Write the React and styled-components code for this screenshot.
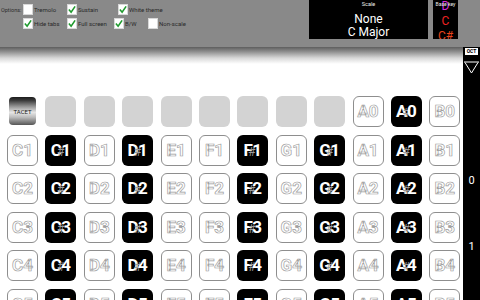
import React from "react";
import styled, { createGlobalStyle } from "styled-components";

const GlobalStyle = createGlobalStyle`
  html, body {
    margin: 0;
    padding: 0;
    background: #fff;
  }
  body {
    width: 480px;
    height: 300px;
    overflow: hidden;
    font-family: Roboto, "Liberation Sans", sans-serif;
  }
`;

const NOTES = ["C", "C#", "D", "D#", "E", "F", "F#", "G", "G#", "A", "A#", "B"];

const Page = styled.div`
  width: 480px;
  height: 300px;
  display: flex;
  flex-direction: column;
  overflow: hidden;
`;

const Header = styled.header`
  height: 47px;
  flex-shrink: 0;
  background: #898989;
  display: flex;
  align-items: flex-start;
`;

const Options = styled.div`
  width: 309px;
  display: flex;
  align-items: flex-start;
`;

const OptionsLabel = styled.span`
  width: 22px;
  padding: 7px 0 0 1px;
  font-size: 5.5px;
  color: #2e2e2e;
`;

const OptionRows = styled.div`
  display: flex;
  flex-direction: column;
  gap: 3px;
  padding-top: 4px;
`;

const OptionRow = styled.div`
  display: flex;
`;

const Option = styled.label`
  width: ${(p) => p.w}px;
  display: flex;
  align-items: center;
  font-size: 6px;
  color: #2a2a2a;
  white-space: nowrap;
`;

const Box = styled.span`
  width: 10px;
  height: 11px;
  margin-right: 1px;
  background: #fff;
  border: 1px solid #d8d8d8;
  box-sizing: border-box;
  display: flex;
  align-items: center;
  justify-content: center;
`;

const ScaleBox = styled.div`
  width: 119px;
  height: 39px;
  background: #000;
  color: #fff;
  display: flex;
  flex-direction: column;
  align-items: center;
`;

const Caption = styled.span`
  font-size: 5.5px;
  line-height: 8px;
  color: #eee;
`;

const ScaleValue = styled.span`
  font-size: 12px;
  line-height: 13px;
`;

const BaseKey = styled.div`
  position: relative;
  width: 25px;
  height: 39px;
  margin-left: 5px;
  background: #000;
  overflow: hidden;
  display: flex;
  flex-direction: column;
  align-items: center;
`;

const BaseKeyCaption = styled(Caption)`
  position: absolute;
  top: 0;
  left: -4px;
  right: -4px;
  text-align: center;
  white-space: nowrap;
  font-size: 5px;
`;

const KeyChoice = styled.span`
  font-size: 12px;
  line-height: 15px;
  flex-shrink: 0;
  color: ${(p) => p.c};
  &:first-of-type {
    margin-top: -1px;
  }
`;

const Body = styled.div`
  flex: 1;
  display: flex;
  min-height: 0;
`;

const Main = styled.div`
  flex: 1;
  display: flex;
  flex-direction: column;
  overflow: hidden;
`;

const Shade = styled.div`
  height: 17px;
  flex-shrink: 0;
  background: linear-gradient(#5e5e5e, #8a8a8a 25%, #d8d8d8 65%, #fff);
`;

const Grid = styled.div`
  flex-shrink: 0;
  display: grid;
  grid-template-columns: repeat(12, 31px);
  grid-auto-rows: 31px;
  column-gap: 7.4px;
  row-gap: 7.5px;
  padding: 32px 0 0 7px;
`;

const Key = styled.div`
  box-sizing: border-box;
  border-radius: 6px;
  display: flex;
  align-items: center;
  justify-content: center;
  font-size: 17px;
  line-height: 1;
  background: ${(p) =>
    p.kind === "black" ? "#000" : p.kind === "empty" ? "#d3d3d3" : "#fff"};
  border: ${(p) => (p.kind === "white" ? "1px solid #8e8e8e" : "none")};
  color: #fff;
  font-weight: 700;
  -webkit-text-stroke: ${(p) => (p.kind === "white" ? "0.7px #a0a0a0" : "0")};
`;

const Sharp = styled.span`
  font-size: 12px;
  font-weight: 400;
  color: #9a9a9a;
  margin: 2px -3px 0 -5px;
`;

const Tacet = styled.div`
  width: 27px;
  height: 28px;
  margin: 1px 0 0 2px;
  border-radius: 4px;
  background: linear-gradient(#1c1c1c 0%, #3a3a3a 12%, #9a9a9a 35%, #e6e6e6 55%, #bdbdbd 72%, #555 100%);
  display: flex;
  align-items: center;
  justify-content: center;
  font-size: 6px;
  color: #1a1a1a;
  padding-top: 1px;
  box-sizing: border-box;
`;

const Sidebar = styled.aside`
  width: 17px;
  background: #000;
  display: flex;
  flex-direction: column;
  align-items: center;
`;

const OctTag = styled.span`
  width: 13px;
  height: 7px;
  margin-top: 1px;
  background: #fff;
  color: #000;
  font-size: 5px;
  font-weight: 700;
  line-height: 7px;
  text-align: center;
`;

const OctNum = styled.span`
  color: #fff;
  font-size: 11px;
  line-height: 12px;
  margin-top: ${(p) => p.mt}px;
`;

const Check = () => (
  <svg width="9" height="9" viewBox="0 0 9 9">
    <polyline points="1,4.5 3.5,7.5 8,1" fill="none" stroke="#1f9a2e" strokeWidth="1.8" />
  </svg>
);

const Opt = ({ w, on, children }) => (
  <Option w={w}>
    <Box>{on && <Check />}</Box>
    {children}
  </Option>
);

const Label = ({ note, oct }) => {
  if (note.length === 1) return <span>{note + oct}</span>;
  return (
    <span>
      {note[0]}
      <Sharp>#</Sharp>
      {oct}
    </span>
  );
};

const rows = [1, 2, 3, 4, 5];

export default function App() {
  return (
    <Page>
      <GlobalStyle />
      <Header>
        <Options>
          <OptionsLabel>Options:</OptionsLabel>
          <OptionRows>
            <OptionRow>
              <Opt w={44}>Tremolo</Opt>
              <Opt w={51} on>Sustain</Opt>
              <Opt w={60} on>White theme</Opt>
            </OptionRow>
            <OptionRow>
              <Opt w={44} on>Hide tabs</Opt>
              <Opt w={47} on>Full screen</Opt>
              <Opt w={34} on>B/W</Opt>
              <Opt w={40}>Non-scale</Opt>
            </OptionRow>
          </OptionRows>
        </Options>
        <ScaleBox>
          <Caption>Scale</Caption>
          <ScaleValue style={{ marginTop: 5 }}>None</ScaleValue>
          <ScaleValue>C Major</ScaleValue>
        </ScaleBox>
        <BaseKey>
          <KeyChoice c="#d42bd4">D</KeyChoice>
          <KeyChoice c="#ee2222">C</KeyChoice>
          <KeyChoice c="#e8441c">C#</KeyChoice>
          <BaseKeyCaption>Base key</BaseKeyCaption>
        </BaseKey>
      </Header>
      <Body>
        <Main>
          <Shade />
          <Grid>
            <div>
              <Tacet>TACET</Tacet>
            </div>
            {Array.from({ length: 8 }).map((_, i) => (
              <Key key={"e" + i} kind="empty" />
            ))}
            <Key kind="white">
              <Label note="A" oct={0} />
            </Key>
            <Key kind="black">
              <Label note="A#" oct={0} />
            </Key>
            <Key kind="white">
              <Label note="B" oct={0} />
            </Key>
            {rows.map((oct) =>
              NOTES.map((n) => (
                <Key key={n + oct} kind={n.length > 1 ? "black" : "white"}>
                  <Label note={n} oct={oct} />
                </Key>
              ))
            )}
          </Grid>
        </Main>
        <Sidebar>
          <OctTag>OCT</OctTag>
          <svg width="17" height="14" viewBox="0 0 17 14" style={{ marginTop: 6 }}>
            <line x1="1" y1="1" x2="16" y2="1" stroke="#fff" strokeWidth="1" />
            <polyline points="2,1.5 8.5,12 15,1.5" fill="none" stroke="#fff" strokeWidth="1" />
          </svg>
          <OctNum mt={100}>0</OctNum>
          <OctNum mt={54}>1</OctNum>
        </Sidebar>
      </Body>
    </Page>
  );
}
